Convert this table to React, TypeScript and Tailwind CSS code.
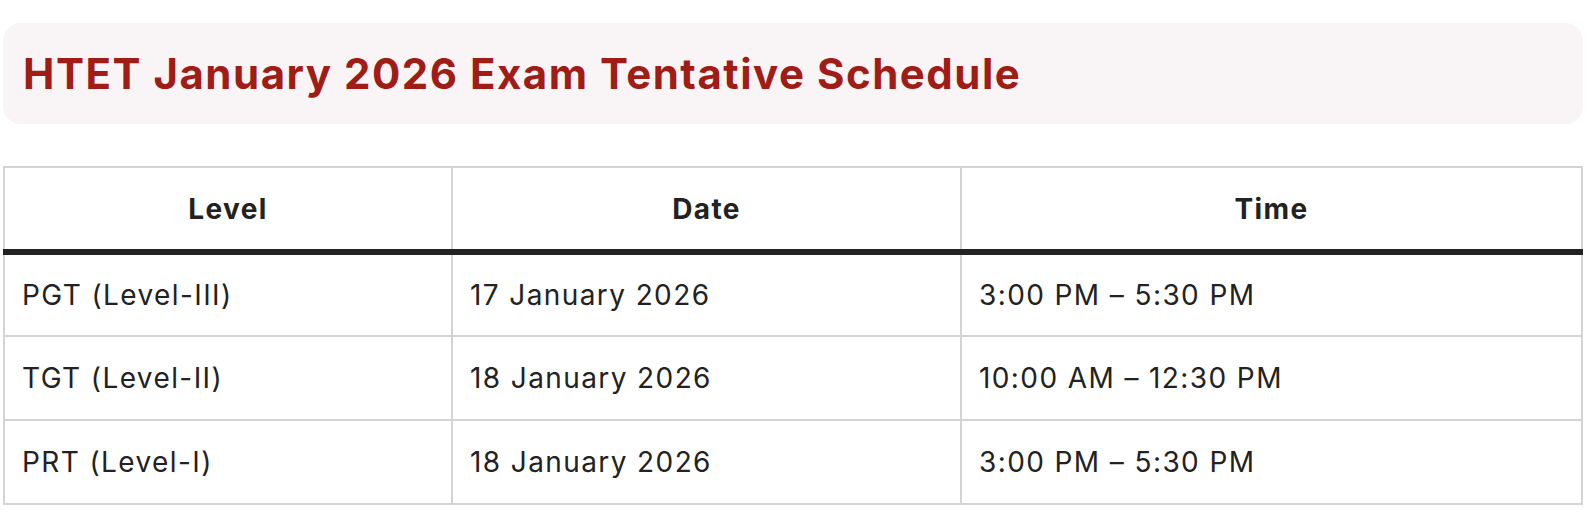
const rows = [
  { level: "PGT (Level-III)", date: "17 January 2026", time: "3:00 PM – 5:30 PM" },
  { level: "TGT (Level-II)", date: "18 January 2026", time: "10:00 AM – 12:30 PM" },
  { level: "PRT (Level-I)", date: "18 January 2026", time: "3:00 PM – 5:30 PM" },
];

export default function App() {
  return (
    <div className="min-h-[526px] bg-white px-[3px] pt-[23px]" style={{ fontFamily: "Inter, 'Noto Sans', sans-serif" }}>
      {/* Title card */}
      <div className="flex h-[101px] items-center rounded-[18px] bg-[#f9f4f5] px-[20px]">
        <h2 className="text-[42px] font-bold tracking-[1.5px] text-[#9f1d16]">
          HTET January 2026 Exam Tentative Schedule
        </h2>
      </div>

      {/* Schedule table */}
      <table className="mt-[42px] w-full border-collapse text-[28px] tracking-[1.4px] text-[#222]">
        <thead>
          <tr className="h-[85px]">
            <th className="w-[448px] border-2 border-b-[6px] border-[#d4d4d4] border-b-[#222] font-bold">Level</th>
            <th className="w-[509px] border-2 border-b-[6px] border-[#d4d4d4] border-b-[#222] font-bold">Date</th>
            <th className="border-2 border-b-[6px] border-[#d4d4d4] border-b-[#222] font-bold">Time</th>
          </tr>
        </thead>
        <tbody>
          {rows.map((r) => (
            <tr key={r.level} className="h-[84px]">
              <td className="border-2 border-[#d4d4d4] px-[17px]">{r.level}</td>
              <td className="border-2 border-[#d4d4d4] px-[17px]">{r.date}</td>
              <td className="border-2 border-[#d4d4d4] px-[17px]">{r.time}</td>
            </tr>
          ))}
        </tbody>
      </table>
    </div>
  );
}
